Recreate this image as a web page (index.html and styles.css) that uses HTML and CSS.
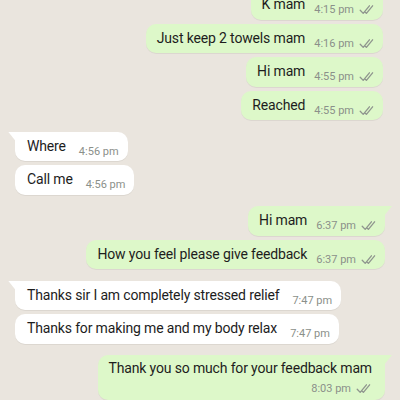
FILE: index.html
```html
<!DOCTYPE html>
<html lang="en">
<head>
<meta charset="utf-8">
<title>Chat</title>
<link rel="stylesheet" href="styles.css">
</head>
<body>
<svg width="0" height="0" class="defs" aria-hidden="true">
  <symbol id="ticks" viewBox="0 0 16 11">
    <path d="M1.2 6.2 L4.2 9.4 L10.4 1.8 M6.2 8.2 L7.4 9.4 L13.6 1.8" fill="none" stroke="currentColor" stroke-width="1.3" stroke-linecap="round" stroke-linejoin="round"/>
  </symbol>
</svg>
<main class="chat">
  <section class="group out first-out">
    <div class="row"><div class="bubble"><span class="text">K mam</span><span class="meta">4:15 pm<svg class="tick"><use href="#ticks"/></svg></span></div></div>
    <div class="row"><div class="bubble"><span class="text">Just keep 2 towels mam</span><span class="meta">4:16 pm<svg class="tick"><use href="#ticks"/></svg></span></div></div>
    <div class="row"><div class="bubble"><span class="text">Hi mam</span><span class="meta">4:55 pm<svg class="tick"><use href="#ticks"/></svg></span></div></div>
    <div class="row"><div class="bubble"><span class="text">Reached</span><span class="meta">4:55 pm<svg class="tick"><use href="#ticks"/></svg></span></div></div>
  </section>

  <section class="group in">
    <div class="row"><div class="bubble tail"><span class="text">Where</span><span class="meta">4:56 pm</span></div></div>
    <div class="row"><div class="bubble"><span class="text">Call me</span><span class="meta">4:56 pm</span></div></div>
  </section>

  <section class="group out">
    <div class="row"><div class="bubble tail"><span class="text">Hi mam</span><span class="meta">6:37 pm<svg class="tick"><use href="#ticks"/></svg></span></div></div>
    <div class="row"><div class="bubble"><span class="text">How you feel please give feedback</span><span class="meta">6:37 pm<svg class="tick"><use href="#ticks"/></svg></span></div></div>
  </section>

  <section class="group in">
    <div class="row"><div class="bubble tail"><span class="text">Thanks sir I am completely stressed relief</span><span class="meta">7:47 pm</span></div></div>
    <div class="row"><div class="bubble"><span class="text">Thanks for making me and my body relax</span><span class="meta">7:47 pm</span></div></div>
  </section>

  <section class="group out">
    <div class="row"><div class="bubble tail stack"><span class="text">Thank you so much for your feedback mam</span><span class="meta">8:03 pm<svg class="tick"><use href="#ticks"/></svg></span></div></div>
  </section>
</main>
</body>
</html>
```

FILE: styles.css
```css
html, body {
  margin: 0;
  height: 100%;
  overflow: hidden;
  background: #eae5de;
}

.defs {
  position: absolute;
}

.chat {
  margin-top: -10px;
  display: flex;
  flex-direction: column;
  gap: 11.5px;
  font-family: Roboto, "Noto Sans", sans-serif;
}

.group {
  display: flex;
  flex-direction: column;
  gap: 4px;
}

.row {
  display: flex;
}

.out .row {
  justify-content: flex-end;
  padding-right: 15px;
}

.first-out .row {
  padding-right: 17px;
}

.in .row {
  justify-content: flex-start;
  padding-left: 15px;
}

.bubble {
  position: relative;
  display: flex;
  align-items: flex-start;
  height: 29.5px;
  box-sizing: border-box;
  padding: 5px 8px 0 11px;
  border-radius: 10px;
  box-shadow: 0 1px 0.5px rgba(0, 0, 0, 0.06);
}

.out .bubble {
  background: #ddf8c9;
}

.in .bubble {
  background: #ffffff;
  padding-left: 12px;
  padding-right: 9px;
}

.text {
  font-size: 14px;
  letter-spacing: -0.15px;
  line-height: 19px;
  color: #1d1d1d;
  white-space: nowrap;
}

.meta {
  display: flex;
  align-items: center;
  margin-top: 8px;
  margin-left: 9px;
  font-size: 11px;
  line-height: 13px;
  color: #8b908a;
  white-space: nowrap;
}

.in .meta {
  margin-left: 13px;
}

.tick {
  width: 16px;
  height: 11px;
  margin-left: 5px;
  color: #8f958e;
}

/* first message of a run gets the pointed corner */
.out .tail {
  border-top-right-radius: 0;
}

.in .tail {
  border-top-left-radius: 0;
}

.tail::before {
  content: "";
  position: absolute;
  top: 0;
  width: 8px;
  height: 10px;
}

.in .tail::before {
  left: -7px;
  background: #ffffff;
  clip-path: polygon(0 0, 100% 0, 100% 100%);
}

.out .tail::before {
  right: -7px;
  background: #ddf8c9;
  clip-path: polygon(0 0, 100% 0, 0 100%);
}

.bubble.stack {
  flex-direction: column;
  align-items: stretch;
  height: 45px;
  padding-top: 4px;
  padding-left: 10px;
  padding-right: 13px;
}

.stack .meta {
  align-self: flex-end;
  margin-top: 4px;
  margin-left: 0;
}
```
